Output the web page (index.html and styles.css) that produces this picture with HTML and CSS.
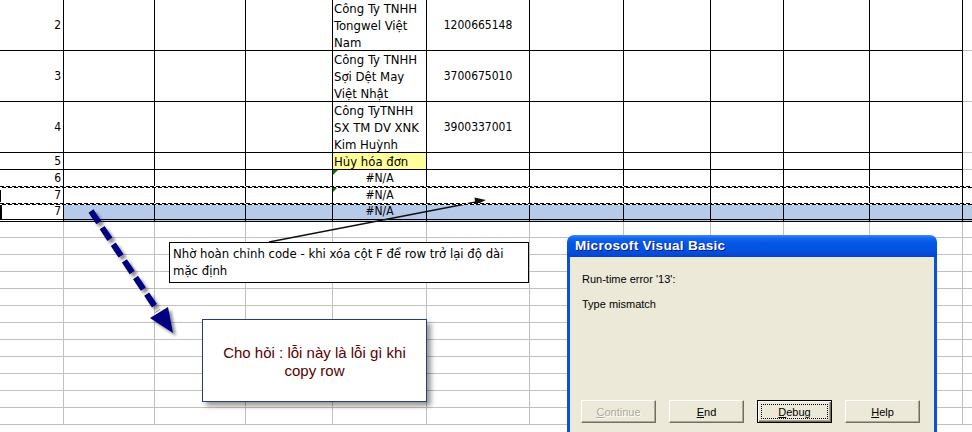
FILE: index.html
```html
<!DOCTYPE html>
<html>
<head>
<meta charset="utf-8">
<link rel="stylesheet" href="styles.css">
</head>
<body>
<div class="sheet">
  <div class="row tall">
    <div class="c hd">2</div><div class="c"></div><div class="c"></div><div class="c"></div>
    <div class="c txt">Công Ty TNHH<br>Tongwel Việt<br>Nam</div>
    <div class="c num">1200665148</div>
    <div class="c"></div><div class="c"></div><div class="c"></div><div class="c"></div><div class="c"></div><div class="c k"></div>
  </div>
  <div class="row tall">
    <div class="c hd">3</div><div class="c"></div><div class="c"></div><div class="c"></div>
    <div class="c txt">Công Ty TNHH<br>Sợi Dệt May<br>Việt Nhật</div>
    <div class="c num">3700675010</div>
    <div class="c"></div><div class="c"></div><div class="c"></div><div class="c"></div><div class="c"></div><div class="c k"></div>
  </div>
  <div class="row tall">
    <div class="c hd">4</div><div class="c"></div><div class="c"></div><div class="c"></div>
    <div class="c txt">Công TyTNHH<br>SX TM DV XNK<br>Kim Huỳnh</div>
    <div class="c num">3900337001</div>
    <div class="c"></div><div class="c"></div><div class="c"></div><div class="c"></div><div class="c"></div><div class="c k"></div>
  </div>
  <div class="row">
    <div class="c hd">5</div><div class="c"></div><div class="c"></div><div class="c"></div>
    <div class="c txt yellow">Hủy hóa đơn</div>
    <div class="c"></div>
    <div class="c"></div><div class="c"></div><div class="c"></div><div class="c"></div><div class="c"></div><div class="c k"></div>
  </div>
  <div class="row ants">
    <div class="c hd">6</div><div class="c"></div><div class="c"></div><div class="c"></div>
    <div class="c na flag">#N/A</div>
    <div class="c"></div>
    <div class="c"></div><div class="c"></div><div class="c"></div><div class="c"></div><div class="c"></div><div class="c k"></div>
  </div>
  <div class="row ants">
    <div class="c hd mark">7</div><div class="c"></div><div class="c"></div><div class="c"></div>
    <div class="c na flag">#N/A</div>
    <div class="c"></div>
    <div class="c"></div><div class="c"></div><div class="c"></div><div class="c"></div><div class="c"></div><div class="c k"></div>
  </div>
  <div class="row sel">
    <div class="c hd mark2">7</div><div class="c"></div><div class="c"></div><div class="c"></div>
    <div class="c na">#N/A</div>
    <div class="c"></div>
    <div class="c"></div><div class="c"></div><div class="c"></div><div class="c"></div><div class="c"></div><div class="c k"></div>
  </div>
  <div class="row empty first"><div class="c hd"></div><div class="c"></div><div class="c"></div><div class="c"></div><div class="c"></div><div class="c"></div><div class="c"></div><div class="c"></div><div class="c"></div><div class="c"></div><div class="c"></div><div class="c k"></div></div>
  <div class="row empty"><div class="c hd"></div><div class="c"></div><div class="c"></div><div class="c"></div><div class="c"></div><div class="c"></div><div class="c"></div><div class="c"></div><div class="c"></div><div class="c"></div><div class="c"></div><div class="c k"></div></div>
  <div class="row empty"><div class="c hd"></div><div class="c"></div><div class="c"></div><div class="c"></div><div class="c"></div><div class="c"></div><div class="c"></div><div class="c"></div><div class="c"></div><div class="c"></div><div class="c"></div><div class="c k"></div></div>
  <div class="row empty"><div class="c hd"></div><div class="c"></div><div class="c"></div><div class="c"></div><div class="c"></div><div class="c"></div><div class="c"></div><div class="c"></div><div class="c"></div><div class="c"></div><div class="c"></div><div class="c k"></div></div>
  <div class="row empty"><div class="c hd"></div><div class="c"></div><div class="c"></div><div class="c"></div><div class="c"></div><div class="c"></div><div class="c"></div><div class="c"></div><div class="c"></div><div class="c"></div><div class="c"></div><div class="c k"></div></div>
  <div class="row empty"><div class="c hd"></div><div class="c"></div><div class="c"></div><div class="c"></div><div class="c"></div><div class="c"></div><div class="c"></div><div class="c"></div><div class="c"></div><div class="c"></div><div class="c"></div><div class="c k"></div></div>
  <div class="row empty"><div class="c hd"></div><div class="c"></div><div class="c"></div><div class="c"></div><div class="c"></div><div class="c"></div><div class="c"></div><div class="c"></div><div class="c"></div><div class="c"></div><div class="c"></div><div class="c k"></div></div>
  <div class="row empty"><div class="c hd"></div><div class="c"></div><div class="c"></div><div class="c"></div><div class="c"></div><div class="c"></div><div class="c"></div><div class="c"></div><div class="c"></div><div class="c"></div><div class="c"></div><div class="c k"></div></div>
  <div class="row empty"><div class="c hd"></div><div class="c"></div><div class="c"></div><div class="c"></div><div class="c"></div><div class="c"></div><div class="c"></div><div class="c"></div><div class="c"></div><div class="c"></div><div class="c"></div><div class="c k"></div></div>
  <div class="row empty"><div class="c hd"></div><div class="c"></div><div class="c"></div><div class="c"></div><div class="c"></div><div class="c"></div><div class="c"></div><div class="c"></div><div class="c"></div><div class="c"></div><div class="c"></div><div class="c k"></div></div>
  <div class="row empty"><div class="c hd"></div><div class="c"></div><div class="c"></div><div class="c"></div><div class="c"></div><div class="c"></div><div class="c"></div><div class="c"></div><div class="c"></div><div class="c"></div><div class="c"></div><div class="c k"></div></div>
  <div class="row empty"><div class="c hd"></div><div class="c"></div><div class="c"></div><div class="c"></div><div class="c"></div><div class="c"></div><div class="c"></div><div class="c"></div><div class="c"></div><div class="c"></div><div class="c"></div><div class="c k"></div></div>
</div>

<svg class="overlay" width="972" height="432" viewBox="0 0 972 432" xmlns="http://www.w3.org/2000/svg">
  <defs>
    <filter id="sh" x="-20%" y="-20%" width="140%" height="140%">
      <feDropShadow dx="3" dy="3" stdDeviation="1.6" flood-color="#000" flood-opacity="0.45"/>
    </filter>
  </defs>
  <line x1="269" y1="242" x2="476" y2="202" stroke="#111" stroke-width="1.3"/>
  <polygon points="486,200 474.5,197.5 475.5,205" fill="#111"/>
  <g filter="url(#sh)">
    <line x1="91" y1="211" x2="158" y2="311" stroke="#000080" stroke-width="6" stroke-dasharray="14 6"/>
    <polygon points="150,318 168,307 173,333" fill="#000080"/>
  </g>
</svg>

<div class="comment">Nhờ hoàn chỉnh code - khi xóa cột F để row trở lại độ dài<br>mặc định</div>

<div class="note">Cho hỏi : lỗi này là lỗi gì khi<br>copy row</div>

<div class="dialog">
  <div class="title">Microsoft Visual Basic</div>
  <div class="dbody">
    <p class="msg">Run-time error '13':</p>
    <p class="msg second">Type mismatch</p>
    <div class="buttons">
      <div class="btn disabled"><span class="u">C</span>ontinue</div>
      <div class="btn"><span class="u">E</span>nd</div>
      <div class="btn focus"><span class="ring"><span class="u">D</span>ebug</span></div>
      <div class="btn"><span class="u">H</span>elp</div>
    </div>
  </div>
</div>
</body>
</html>
```
FILE: styles.css
```css
html, body {
  margin: 0;
  padding: 0;
  background: #fff;
  overflow: hidden;
  width: 972px;
  height: 432px;
}

.sheet {
  font-family: "DejaVu Sans Condensed", "DejaVu Sans", sans-serif;
  font-size: 13px;
  color: #000;
}

.row {
  display: grid;
  grid-template-columns: 64px 91px 91px 87px 94px 103px 94px 87px 73px 86px 93px 1fr;
  height: 17px;
  position: relative;
}

.row.tall { height: 51px; }

.c {
  box-sizing: border-box;
  border-right: 1px solid #000;
  border-bottom: 1px solid #000;
  line-height: 17px;
  white-space: nowrap;
  overflow: hidden;
  position: relative;
}

.c.k {
  border-right: none;
  border-bottom-color: #c0c0c0;
}

.hd {
  display: flex;
  align-items: center;
  justify-content: flex-end;
  padding-right: 2px;
  font-size: 12px;
}

.txt {
  padding-left: 1px;
  display: flex;
  align-items: center;
}

.num, .na {
  display: flex;
  align-items: center;
  justify-content: center;
  font-size: 12px;
}

.yellow { background: #ffff99; }

.flag::before {
  content: "";
  position: absolute;
  left: 0;
  top: 0;
  border-top: 5px solid #008000;
  border-right: 5px solid transparent;
}

/* marching ants of the copied range */
.ants::after {
  content: "";
  position: absolute;
  left: 0;
  right: 0;
  bottom: -1px;
  height: 2px;
  z-index: 2;
  background:
    repeating-linear-gradient(90deg, #000 0 4px, #fff 4px 6px) top / 100% 1px no-repeat,
    repeating-linear-gradient(90deg, #fff 0 2px, #000 2px 6px) bottom / 100% 1px no-repeat;
}

.row.sel {
  height: 18px;
}

.sel .c {
  background: #b6caea;
  border-bottom: 3px double #000;
}

.sel .c.hd {
  background: #fff;
}

.mark2::after {
  content: "";
  position: absolute;
  left: 0;
  top: 0;
  bottom: 0;
  width: 2px;
  background: #000;
}

.mark::after {
  content: "";
  position: absolute;
  left: 0;
  top: 3px;
  width: 1px;
  height: 12px;
  background: #000;
}

.row.empty { height: 17px; }
.row.empty.first { height: 16px; }

.empty .c {
  border-right-color: #c0c0c0;
  border-bottom-color: #c0c0c0;
}

.overlay {
  position: absolute;
  left: 0;
  top: 0;
  pointer-events: none;
}

.comment {
  position: absolute;
  left: 169px;
  top: 242px;
  width: 360px;
  height: 41px;
  box-sizing: border-box;
  border: 1px solid #000;
  background: #fff;
  font-family: "DejaVu Sans Condensed", "DejaVu Sans", sans-serif;
  font-size: 13px;
  line-height: 17px;
  padding: 2px 3px;
  color: #000;
  white-space: nowrap;
}

.note {
  position: absolute;
  left: 202px;
  top: 319px;
  width: 225px;
  height: 83px;
  box-sizing: border-box;
  border: 1px solid #243f60;
  background: #fff;
  box-shadow: 4px 4px 5px rgba(0, 0, 0, 0.4);
  font-family: "Liberation Sans", Arial, sans-serif;
  font-size: 15px;
  line-height: 18px;
  color: #5a0000;
  text-align: center;
  padding-top: 24px;
}

.dialog {
  position: absolute;
  left: 567px;
  top: 235px;
  width: 370px;
  height: 230px;
  font-family: "Liberation Sans", Arial, sans-serif;
}

.title {
  height: 22px;
  box-sizing: border-box;
  border-radius: 7px 7px 0 0;
  background: linear-gradient(#3a8cf7 0, #1466ef 3px, #0556e6 8px, #0452df 15px, #0448d6 20px, #0340c8 22px);
  color: #fff;
  font-weight: bold;
  font-size: 13.5px;
  letter-spacing: 0.3px;
  line-height: 22px;
  padding-left: 8px;
  text-shadow: 1px 1px 0 #0a1a80;
}

.dbody {
  background: #ece9d8;
  border-left: 3px solid #0a50e0;
  border-right: 3px solid #0a50e0;
  height: 210px;
  box-sizing: border-box;
  padding: 16px 0 0 12px;
  font-size: 11px;
  color: #000;
}

.msg {
  margin: 0;
  line-height: 13px;
}

.msg.second {
  margin-top: 12px;
}

.buttons {
  display: flex;
  gap: 13px;
  margin-top: 89px;
  margin-left: -1px;
}

.btn {
  width: 75px;
  height: 23px;
  box-sizing: border-box;
  border: 1px solid;
  border-color: #fff #716f64 #716f64 #fff;
  box-shadow: inset -1px -1px 0 #aca899;
  background: #ece9d8;
  display: flex;
  align-items: center;
  justify-content: center;
  font-size: 11px;
}

.btn.disabled {
  color: #aca899;
  text-shadow: 1px 1px 0 #fff;
}

.btn.focus {
  border: 1px solid #000;
  box-shadow: inset 1px 1px 0 #fff, inset -1px -1px 0 #716f64, inset -2px -2px 0 #aca899;
  padding: 3px;
}

.ring {
  flex: 1;
  align-self: stretch;
  border: 1px dotted #000;
  display: flex;
  align-items: center;
  justify-content: center;
}

.u { text-decoration: underline; }
```
